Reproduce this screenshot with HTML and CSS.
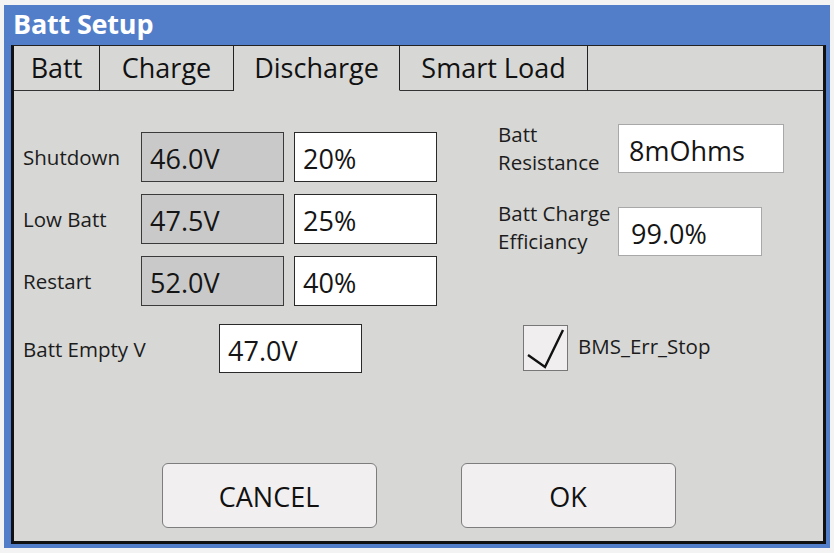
FILE: index.html
```html
<!DOCTYPE html>
<html>
<head>
<meta charset="utf-8">
<link rel="stylesheet" href="styles.css">
</head>
<body>
<div class="window">
  <div class="titlebar">Batt Setup</div>
  <div class="panel">
    <div class="tabs">
      <div class="tab tab-batt">Batt</div>
      <div class="tab tab-charge">Charge</div>
      <div class="tab tab-discharge active">Discharge</div>
      <div class="tab tab-smart">Smart Load</div>
      <div class="tab-filler"></div>
    </div>
    <div class="body">
      <div class="main">
        <div class="left">
          <div class="grid">
            <div class="label">Shutdown</div>
            <div class="field gray">46.0V</div>
            <div class="field white">20%</div>
            <div class="label">Low Batt</div>
            <div class="field gray">47.5V</div>
            <div class="field white">25%</div>
            <div class="label">Restart</div>
            <div class="field gray">52.0V</div>
            <div class="field white">40%</div>
          </div>
          <div class="empty-row">
            <div class="label empty-label">Batt Empty V</div>
            <div class="field white">47.0V</div>
          </div>
        </div>
        <div class="right">
          <div class="r-row">
            <div class="r-label r-label-1">Batt<br>Resistance</div>
            <div class="field light wide">8mOhms</div>
          </div>
          <div class="r-row r-row-2">
            <div class="r-label r-label-2">Batt Charge<br>Efficiancy</div>
            <div class="field light narrow">99.0%</div>
          </div>
          <div class="check-row">
            <div class="checkbox">
              <svg width="45" height="46" viewBox="0 0 45 46"><path d="M5 30 L22 42 L40 5" fill="none" stroke="#111" stroke-width="2.4" stroke-linejoin="miter"/></svg>
            </div>
            <div class="check-label">BMS_Err_Stop</div>
          </div>
        </div>
      </div>
      <div class="buttons">
        <div class="btn">CANCEL</div>
        <div class="btn">OK</div>
      </div>
    </div>
  </div>
</div>
</body>
</html>
```
FILE: styles.css
```css
* { box-sizing: border-box; }
html, body { margin: 0; padding: 0; }
body {
  background: #f3f3f3;
  font-family: "Open Sans", "Noto Sans", sans-serif;
  color: #1a1a1a;
  width: 834px;
  height: 553px;
  overflow: hidden;
}
.window {
  margin: 5px 0 0 4px;
  width: 826px;
  height: 543px;
  background: #527ec9;
  padding: 0 4px 4px 7px;
  display: flex;
  flex-direction: column;
}
.titlebar {
  height: 40px;
  padding-left: 2px;
  color: #fff;
  font-weight: 700;
  font-size: 27px;
  line-height: 38px;
  letter-spacing: -0.2px;
}
.panel {
  flex: 1;
  display: flex;
  flex-direction: column;
  background: #d7d7d5;
  border: 3px solid #111;
  border-top: 1px solid #222;
}
.tabs {
  display: flex;
  height: 45px;
}
.tab {
  height: 45px;
  border-right: 1px solid #222;
  border-bottom: 1px solid #333;
  font-size: 27px;
  line-height: 43px;
  text-align: center;
  color: #111;
}
.tab.active { border-bottom-color: transparent; }
.tab-batt { width: 86px; }
.tab-charge { width: 134px; }
.tab-discharge { width: 166px; }
.tab-smart { width: 188px; }
.tab-filler {
  flex: 1;
  height: 45px;
  border-bottom: 1px solid #333;
}
.body {
  flex: 1;
  display: flex;
  flex-direction: column;
}
.main {
  display: flex;
  padding: 33px 0 0 9px;
}
.left { padding-top: 8px; width: 414px; }
.grid {
  display: grid;
  grid-template-columns: 108px 143px 143px;
  grid-auto-rows: 50px;
  column-gap: 10px;
  row-gap: 12px;
}
.label {
  font-size: 20.5px;
  display: flex;
  align-items: center;
  color: #1c1c1c;
}
.field {
  height: 50px;
  display: flex;
  align-items: center;
  padding: 3px 0 0 8px;
  font-size: 27px;
  color: #151515;
}
.gray { background: #c9c9c9; border: 1.5px solid #3a3a3a; }
.white { background: #fff; border: 1.5px solid #2a2a2a; }
.empty-row {
  display: flex;
  margin-top: 18px;
}
.empty-label { width: 196px; }
.empty-row .field { width: 143px; height: 49px; }
.right {
  margin-left: 61px;
  display: flex;
  flex-direction: column;
}
.r-row {
  display: flex;
  align-items: flex-start;
}
.r-row-2 { margin-top: 31px; }
.r-label {
  width: 120px;
  font-size: 20.5px;
  line-height: 28px;
  color: #1c1c1c;
}
.r-label-1 { margin-top: -4px; }
.r-label-2 { margin-top: -8px; }
.light {
  background: #fff;
  border: 1.5px solid #a8a8a8;
  height: 49px;
  padding-left: 10px;
}
.wide { width: 166px; }
.narrow { width: 144px; padding-left: 12px; }
.check-row {
  display: flex;
  align-items: center;
  margin-top: 69px;
  margin-left: 25px;
}
.checkbox {
  width: 45px;
  height: 46px;
  background: #f0eeee;
  border: 1px solid #777;
}
.checkbox svg { display: block; margin: -1px; }
.check-label {
  margin-left: 10px;
  margin-top: -4px;
  font-size: 20.5px;
  color: #1c1c1c;
}
.buttons {
  margin-top: auto;
  display: flex;
  justify-content: center;
  gap: 84px;
  padding-bottom: 13px;
}
.btn {
  width: 215px;
  height: 65px;
  background: #f1eff0;
  border: 1.5px solid #7d7d7d;
  border-radius: 6px;
  display: flex;
  align-items: center;
  justify-content: center;
  font-size: 27px;
  color: #111;
  padding-top: 2px;
}
```
